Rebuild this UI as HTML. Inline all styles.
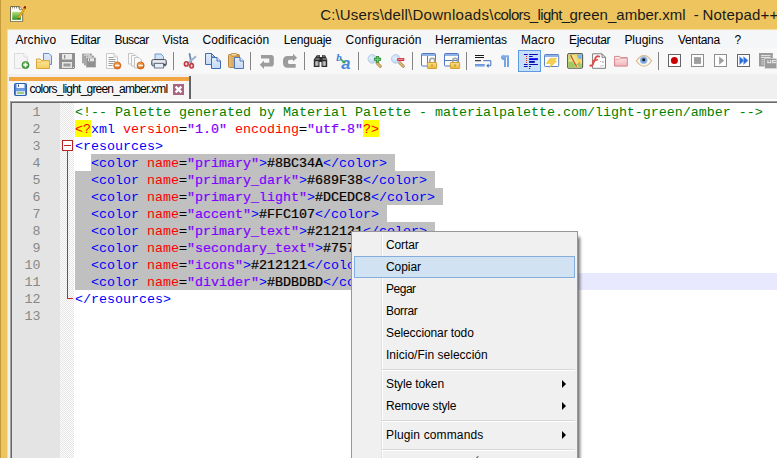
<!DOCTYPE html>
<html lang="es">
<head>
<meta charset="utf-8">
<title>Notepad++</title>
<style>
html,body{margin:0;padding:0;}
body{width:777px;height:458px;overflow:hidden;position:relative;background:#EEC45E;font-family:"Liberation Sans",sans-serif;}
#win{position:absolute;left:0;top:0;width:777px;height:458px;overflow:hidden;}
#lb{position:absolute;left:0;top:0;width:1px;height:458px;background:#C39A3C;}
#title{position:absolute;left:320px;top:3px;height:24px;line-height:24px;font-size:15px;color:#1a1a1a;white-space:pre;}
.ts{position:absolute;top:0;white-space:pre;}
#client{position:absolute;left:8px;top:30px;width:780px;height:440px;background:#F0F0F0;}
#menubar{position:absolute;left:8px;top:30px;width:780px;height:18px;background:#F5F6F7;}
#crl{position:absolute;left:7px;top:29px;width:1px;height:440px;background:#F4DDA2;}
#crt{position:absolute;left:7px;top:29px;width:780px;height:1px;background:#F4DDA2;}
.mi{position:absolute;top:30px;height:20px;line-height:21px;font-size:12px;color:#000;white-space:nowrap;}
#toolbar{position:absolute;left:8px;top:48px;width:780px;height:26px;background:#F8F8F9;}
.tsep{position:absolute;top:52px;width:1px;height:18px;background:#848484;}
#tbhl{position:absolute;left:518px;top:50px;width:21px;height:20px;background:#C7DFFA;border:1px solid #5E9AE0;}
.ic{position:absolute;top:53px;width:16px;height:16px;overflow:visible;}
#tabbar{position:absolute;left:8px;top:74px;width:780px;height:27px;background:#F0F0F0;}
#tab{position:absolute;left:9px;top:77px;width:180px;height:23px;background:#F6F6F6;}
#tabtop{position:absolute;left:9px;top:77px;width:180px;height:4px;background:#F2A541;}
#tabr{position:absolute;left:189px;top:76px;width:2px;height:24px;background:#62666B;}
#tabline{position:absolute;left:9px;top:99px;width:780px;height:2px;background:#FDFDFD;}
#tabico{position:absolute;left:14px;top:83px;width:13px;height:13px;}
#tabx{position:absolute;left:173px;top:84px;width:11px;height:11px;}
#tabtxt{position:absolute;left:29.500px;top:80px;height:18px;line-height:18px;font-size:12px;color:#000;white-space:nowrap;letter-spacing:-0.796px;}
#edwrap{position:absolute;left:10px;top:101px;width:780px;height:400px;background:#fff;border-left:1px solid #A0A0A0;border-top:1px solid #A0A0A0;}
#edwrap2{position:absolute;left:11px;top:102px;width:780px;height:400px;background:#fff;border-left:1px solid #696969;border-top:1px solid #696969;}
#lnm{position:absolute;left:12px;top:103px;width:48px;height:400px;background:#E4E4E4;}
#fold{position:absolute;left:60px;top:103px;width:14px;height:400px;background-color:#fff;
 background-image:linear-gradient(45deg,#E4E4E4 25%,transparent 25%,transparent 75%,#E4E4E4 75%),linear-gradient(45deg,#E4E4E4 25%,transparent 25%,transparent 75%,#E4E4E4 75%);
 background-size:2px 2px;background-position:0 0,1px 1px;}
.ln{position:absolute;left:12px;width:28.500px;margin-top:1px;height:17px;line-height:17px;text-align:right;font-family:"Liberation Mono",monospace;font-size:13.333px;color:#888888;}
.cl{position:absolute;left:75px;margin-top:1px;height:17px;line-height:17px;font-family:"Liberation Mono",monospace;font-size:13.333px;white-space:pre;color:#000;}
.b{font-weight:normal;-webkit-text-stroke:0.22px currentColor;}
.cm{color:#008000;}
.tg{color:#0000FF;}
.at{color:#FF0000;}
.st{color:#8000FF;}
.df{color:#000;}
.pi{color:#FF0000;}
.yl{position:absolute;top:120px;width:16px;height:17px;background:#FFFF00;}
.sel{position:absolute;height:17px;background:#C0C0C0;}
.curline{position:absolute;left:75px;width:720px;height:17px;background:#E8E8FF;}
#foldbox{position:absolute;left:62px;top:140px;width:9px;height:9px;border:1px solid #B82424;background:#fff;}
#foldbox i{position:absolute;left:1px;top:4px;width:7px;height:1px;background:#B82424;}
#foldv{position:absolute;left:67px;top:151px;width:1px;height:148px;background:#C82828;}
#foldh{position:absolute;left:67px;top:298px;width:6px;height:1px;background:#C82828;}
#caret{position:absolute;left:387px;top:273px;width:1px;height:17px;background:#000;}
/* context menu */
#ctx{position:absolute;left:351px;top:231px;width:225px;height:260px;background:#F0F0F0;border:1px solid #979797;box-shadow:3px 5px 3px -1px rgba(0,0,0,0.55);}
#ctxg{position:absolute;left:29px;top:2px;width:1px;height:260px;background:#E0E0E0;border-right:1px solid #fff;}
.ci{position:absolute;left:34px;height:22px;line-height:22px;font-size:12px;color:#000;white-space:nowrap;}
.csep{position:absolute;left:29px;width:194px;height:1px;background:#D7D7D7;border-bottom:1px solid #fff;}
#hl{position:absolute;left:2px;top:24px;width:219px;height:20px;background:#D1E2F2;border:1px solid #84ACDD;}
.arr{position:absolute;left:210px;width:0;height:0;border-top:4px solid transparent;border-bottom:4px solid transparent;border-left:4px solid #000;}
</style>
</head>
<body>
<div id="win">
<div id="lb"></div><div id="crl"></div><div id="crt"></div>
<svg id="appico" viewBox="0 0 16 16" style="position:absolute;left:10px;top:6px;width:16px;height:16px">
<defs><linearGradient id="gApp" x1="0" y1="0" x2="0" y2="1"><stop offset="0" stop-color="#B7E07A"/><stop offset="1" stop-color="#2F9426"/></linearGradient></defs>
<path d="M.5 .5h9l3.200 3.200v12h-12.200z" fill="#FBFBF6" stroke="#6B6347" stroke-width=".9"/><path d="M9.500 .5v3.200h3.200" fill="#E9E7DA" stroke="#6B6347" stroke-width=".7"/>
<path d="M2 1.800h1M4 1.800h1M6 1.800h1M8 1.800h.8" stroke="#555" stroke-width="1"/>
<rect x="2.200" y="5.800" width="8.700" height="8" fill="url(#gApp)"/>
<path d="M15 1.500l-6.300 10.500" stroke="#B8860B" stroke-width="2.300"/><path d="M15 1.500l-6.300 10.500" stroke="#F2B21D" stroke-width="1.300"/>
<path d="M15.600 .4l-1.200 2" stroke="#A30F0F" stroke-width="2.300"/><path d="M8.900 11.600l-.9 2 1.800-1.300z" fill="#3A2A10"/>
</svg>
<div id="title"><span class="ts" id="t0" style="left:0.2px;letter-spacing:0.155px">C:\Users\dell\</span><span class="ts" id="t1" style="left:92.4px;letter-spacing:0.291px">Downloads\</span><span class="ts" id="t2" style="left:173.7px;letter-spacing:-0.648px">colors_light_</span><span class="ts" id="t3" style="left:249.5px;letter-spacing:0.014px">green_amber.xml</span><span class="ts" id="t4" style="left:369.5px;letter-spacing:0.000px"> - </span><span class="ts" id="t5" style="left:382.6px;letter-spacing:0.171px">Notepad++</span></div>
<div id="client"></div>
<div id="menubar"></div>
<span class="mi fit" id="m0" style="left:15.4px;letter-spacing:0.114px">Archivo</span>
<span class="mi fit" id="m1" style="left:70.6px;letter-spacing:-0.272px">Editar</span>
<span class="mi fit" id="m2" style="left:114.4px;letter-spacing:-0.512px">Buscar</span>
<span class="mi fit" id="m3" style="left:162.6px;letter-spacing:-0.117px">Vista</span>
<span class="mi fit" id="m4" style="left:202.4px;letter-spacing:0.130px">Codificación</span>
<span class="mi fit" id="m5" style="left:283.7px;letter-spacing:-0.184px">Lenguaje</span>
<span class="mi fit" id="m6" style="left:345.6px;letter-spacing:0.154px">Configuración</span>
<span class="mi fit" id="m7" style="left:435.0px;letter-spacing:0.006px">Herramientas</span>
<span class="mi fit" id="m8" style="left:521.0px;letter-spacing:0.064px">Macro</span>
<span class="mi fit" id="m9" style="left:569.0px;letter-spacing:-0.347px">Ejecutar</span>
<span class="mi fit" id="m10" style="left:624.4px;letter-spacing:-0.027px">Plugins</span>
<span class="mi fit" id="m11" style="left:678.0px;letter-spacing:-0.324px">Ventana</span>
<span class="mi fit" id="m12" style="left:734.5px;letter-spacing:0.000px">?</span>
<div id="toolbar"></div>

<svg width="0" height="0" style="position:absolute">
<defs>
<linearGradient id="gFold" x1="0" y1="0" x2="0" y2="1"><stop offset="0" stop-color="#FCE9A6"/><stop offset="1" stop-color="#F5CF5E"/></linearGradient>
<linearGradient id="gPage" x1="0" y1="0" x2="0" y2="1"><stop offset="0" stop-color="#E3ECFA"/><stop offset="1" stop-color="#C5D8F5"/></linearGradient>
<linearGradient id="gClip" x1="0" y1="0" x2="1" y2="0"><stop offset="0" stop-color="#E9BE7C"/><stop offset="1" stop-color="#C98F3E"/></linearGradient>
<radialGradient id="gGreen" cx="0.4" cy="0.35" r="0.7"><stop offset="0" stop-color="#7CC56A"/><stop offset="1" stop-color="#2E8A2A"/></radialGradient>
<radialGradient id="gOrange" cx="0.4" cy="0.35" r="0.7"><stop offset="0" stop-color="#F9A64A"/><stop offset="1" stop-color="#D9600F"/></radialGradient>
<linearGradient id="gPink" x1="0" y1="0" x2="0" y2="1"><stop offset="0" stop-color="#FBECEC"/><stop offset="1" stop-color="#F1B4B8"/></linearGradient>
<linearGradient id="gLock" x1="0" y1="0" x2="0" y2="1"><stop offset="0" stop-color="#FBE08A"/><stop offset="1" stop-color="#E8B63C"/></linearGradient>
<linearGradient id="gPrn" x1="0" y1="0" x2="0" y2="1"><stop offset="0" stop-color="#E8EAEE"/><stop offset="1" stop-color="#9AA0AC"/></linearGradient>
<radialGradient id="gLens" cx="0.4" cy="0.4" r="0.7"><stop offset="0" stop-color="#E6F0FB"/><stop offset="1" stop-color="#B5CFEE"/></radialGradient>
</defs></svg>

<div id="tbhl"></div>
<svg class="ic" style="left:13px" viewBox="0 0 16 16"><path d="M1.500 .5h9.500l3.500 3.500v11.500h-13z" fill="#F5F5F5" stroke="#DCDCDC"/><path d="M11 .5v3.500h3.500" fill="#FCFCFC" stroke="#DCDCDC"/><circle cx="12.500" cy="12" r="3.600" fill="url(#gGreen)" stroke="#2D7A2A" stroke-width=".6"/><path d="M12.500 9.800v4.400M10.300 12h4.400" stroke="#fff" stroke-width="1.500"/></svg>
<svg class="ic" style="left:36px" viewBox="0 0 16 16"><path d="M7.500 .5h5.500l2.500 2.500v8.500h-8z" fill="url(#gPage)" stroke="#5F8FD0"/><path d="M.5 15.500v-9.500h3.500l1.500 1.500h8v8z" fill="url(#gFold)" stroke="#D9A53C"/><path d="M1 9.500h4l1.500-1.500h7" fill="none" stroke="#E8BC55" stroke-width=".8"/></svg>
<svg class="ic" style="left:59px" viewBox="0 0 16 16"><path d="M0 0h16v15l-1 1h-15z" fill="#8F8F8F"/><rect x="3" y="1" width="10" height="5.500" fill="#E9E9E9"/><rect x="5" y="2" width="1.300" height="3.500" fill="#8F8F8F"/><rect x="3" y="9" width="10" height="6" fill="#E4E4E4"/><rect x="4.500" y="10.500" width="7" height="3" fill="#9A9A9A"/><rect x="14" y="14" width="1" height="1" fill="#E4E4E4"/></svg>
<svg class="ic" style="left:82px" viewBox="0 0 16 16"><rect x="0" y="0.5" width="10" height="10" fill="#909090" stroke="#E9E9E9" stroke-width=".5"/><rect x="2" y="1.3" width="6" height="1.3" fill="#E6E6E6"/><rect x="3" y="1.5" width="1" height="0.8" fill="#909090"/><rect x="2" y="2.5" width="10" height="10" fill="#909090" stroke="#E9E9E9" stroke-width=".5"/><rect x="4" y="3.3" width="6" height="1.3" fill="#E6E6E6"/><rect x="5" y="3.5" width="1" height="0.8" fill="#909090"/><rect x="4" y="4.5" width="10" height="10" fill="#909090" stroke="#E9E9E9" stroke-width=".5"/><rect x="6" y="5.3" width="6" height="3" fill="#E6E6E6"/><rect x="7" y="5.5" width="1" height="2.5" fill="#909090"/></svg>
<svg class="ic" style="left:105px" viewBox="0 0 16 16"><path d="M1.500 .5h7.500l3.500 3.500v11.500h-11z" fill="#FCFCFC" stroke="#C9C9C9"/><path d="M9 .5v3.500h3.500" fill="#F2F2F2" stroke="#C9C9C9"/><path d="M3.500 4.500h5M3.500 6.500h7M3.500 8.500h7M3.500 10.500h5M3.500 12.500h4" stroke="#9C9C9C" stroke-width="1"/><circle cx="12.300" cy="12.500" r="3.600" fill="url(#gOrange)" stroke="#C2540C" stroke-width=".6"/><rect x="10.100" y="11.700" width="4.400" height="1.600" fill="#fff"/></svg>
<svg class="ic" style="left:128px" viewBox="0 0 16 16"><path d="M0.5 0.5h4.500l2.500 2.500v8h-7z" fill="#FAFAFA" stroke="#C4C4C4"/><path d="M3.5 2.5h4.500l2.500 2.500v8h-7z" fill="#FAFAFA" stroke="#C4C4C4"/><path d="M6.5 4.5h4.500l2.500 2.500v8h-7z" fill="#FAFAFA" stroke="#C4C4C4"/><circle cx="12.600" cy="12.500" r="3.600" fill="url(#gOrange)" stroke="#C2540C" stroke-width=".6"/><rect x="10.400" y="11.700" width="4.400" height="1.600" fill="#fff"/></svg>
<svg class="ic" style="left:151px" viewBox="0 0 16 16"><path d="M4 6.500v-5.500h6l2.500 2.500v3z" fill="#CFE2F8" stroke="#6E9AD6"/><rect x=".7" y="6.500" width="14.600" height="6.500" rx="1.800" fill="url(#gPrn)" stroke="#4A5260"/><rect x="3.500" y="10.500" width="9" height="4.500" fill="#E6EEF9" stroke="#6F7A8C"/><rect x="2" y="8.300" width="12" height="1" fill="#F5F6F8"/><rect x="12.500" y="11" width="2" height="1.200" fill="#3A3F48"/></svg>
<svg class="ic" style="left:182px" viewBox="0 0 16 16"><path d="M7.400 .2l2 9.800" stroke="#7088AA" stroke-width="1.800" fill="none"/><path d="M14 3.200l-8 7" stroke="#9CB2D0" stroke-width="2" fill="none"/><ellipse cx="4.300" cy="10.900" rx="1.900" ry="2.100" fill="#F3D9DB" stroke="#C23A44" stroke-width="1.600"/><ellipse cx="9.600" cy="12.800" rx="1.800" ry="2.200" fill="#F3D9DB" stroke="#C23A44" stroke-width="1.600"/></svg>
<svg class="ic" style="left:205px" viewBox="0 0 16 16"><path d="M.5 .5h6l3.500 3.500v7.500h-9.500z" fill="url(#gPage)" stroke="#3F6DB3"/><path d="M6.500 .5v3.500h3.500" fill="none" stroke="#3F6DB3"/><path d="M6.500 4.500h5.500l3.500 3.500v7.500h-9z" fill="url(#gPage)" stroke="#3F6DB3"/><path d="M12 4.500v3.500h3.500" fill="#EEF3FC" stroke="#3F6DB3"/></svg>
<svg class="ic" style="left:228px" viewBox="0 0 16 16"><rect x=".5" y="1.500" width="11" height="13" rx="1" fill="url(#gClip)" stroke="#B98436"/><rect x="3" y=".5" width="6" height="2.500" rx=".8" fill="#F1D9A8" stroke="#B98436" stroke-width=".8"/><path d="M6.500 4.500h5.500l3.500 3.500v7.500h-9z" fill="url(#gPage)" stroke="#4C77B9"/><path d="M12 4.500v3.500h3.500" fill="#EEF3FC" stroke="#4C77B9"/></svg>
<svg class="ic" style="left:259px" viewBox="0 0 16 16"><path d="M2 2h10q2.800 0 2.800 2.800v6q0 2.800-2.800 2.800h-7v2.400l-4.200-4.300 4.200-4.300v2.400h5.300v-4.200h-8.300z" fill="#9C9C9C"/></svg>
<svg class="ic" style="left:282px" viewBox="0 0 16 16"><path d="M11 .8l4.100 3.900-4.100 3.900v-1.800h-3.500q-1.500 0-1.500 1.500v1.100q0 1.500 1.500 1.500h6.200v3.900h-8q-4.700 0-4.700-4.700v-2.500q0-4.700 4.700-4.700h5.300z" fill="#9C9C9C"/></svg>
<svg class="ic" style="left:313px" viewBox="0 0 16 16"><path d="M4 2h3v2h2v-2h3l2.200 4.500v7.400h-5.700v-4.900h-2v4.900h-5.700v-7.400z" fill="#2E2E2E"/><path d="M4.300 2.300h2.200v1.500h-2.600zM9.500 2.300h2.200l.4 1.500h-2.600z" fill="#7A7A7A"/><path d="M3 5l-1 2h4.500v-2zM9.500 5v2h4.500l-1-2z" fill="#6E6E6E"/><rect x="2" y="8.300" width="3.600" height="4.400" fill="#9A9A9A"/><rect x="9.400" y="8.300" width="3.600" height="4.400" fill="#9A9A9A"/><rect x="3.300" y="8.300" width="1" height="4.400" fill="#D5D5D5"/><rect x="10.700" y="8.300" width="1" height="4.400" fill="#D5D5D5"/></svg>
<svg class="ic" style="left:336px" viewBox="0 0 16 16"><text x=".2" y="8" font-family="Liberation Serif, serif" font-style="italic" font-weight="bold" font-size="11" fill="#3F7AD6">b</text><text x="5.300" y="15.800" font-family="Liberation Sans, sans-serif" font-style="italic" font-weight="bold" font-size="16.500" fill="#4A88E0">a</text><path d="M4.500 6l3.500 3.200" stroke="#35A24C" stroke-width="1.600"/><path d="M9.600 10.600l-3.600-.6 2.800-2.600z" fill="#35A24C"/></svg>
<svg class="ic" style="left:367px" viewBox="0 0 16 16"><path d="M10 10l3.300 3.300" stroke="#A9803F" stroke-width="3" stroke-linecap="round"/><path d="M10 10l3.300 3.300" stroke="#E2BF80" stroke-width="1.500" stroke-linecap="round"/><circle cx="5.300" cy="5.900" r="4.300" fill="url(#gLens)" stroke="#B5CCE8" stroke-width=".9"/><path d="M10.600 2.900v6.900M7.100 6.350h7" stroke="#2E8E39" stroke-width="3"/><path d="M10.600 3.700v5.300M7.900 6.350h5.400" stroke="#6FC873" stroke-width="1.300"/></svg>
<svg class="ic" style="left:390px" viewBox="0 0 16 16"><path d="M9.700 9.700l3.600 3.600" stroke="#A9803F" stroke-width="3" stroke-linecap="round"/><path d="M9.700 9.700l3.600 3.600" stroke="#E2BF80" stroke-width="1.500" stroke-linecap="round"/><circle cx="5.700" cy="5.900" r="4.300" fill="url(#gLens)" stroke="#B5CCE8" stroke-width=".9"/><rect x="7.200" y="5" width="7.100" height="3" rx=".4" fill="#D22F3E"/><rect x="8" y="5.800" width="5.500" height="1" fill="#F59AA0"/></svg>
<svg class="ic" style="left:421px" viewBox="0 0 16 16"><rect x=".5" y=".5" width="14" height="12.500" rx=".8" fill="#FDFDFD" stroke="#4F78C0"/><rect x="1" y="1" width="13" height="2" fill="#8FB2E6"/><path d="M6.500 3v10" stroke="#4F78C0"/><path d="M8.800 9.500v-1.800a2.450 2.450 0 0 1 4.900 0v1.800" fill="none" stroke="#A4A4A4" stroke-width="1.700"/><rect x="6.400" y="9.500" width="9.200" height="6" rx=".6" fill="url(#gLock)" stroke="#D2A030"/><rect x="10.300" y="11.300" width="1.400" height="2.400" fill="#C79A2E"/></svg>
<svg class="ic" style="left:444px" viewBox="0 0 16 16"><rect x=".5" y=".5" width="14" height="12.500" rx=".8" fill="#FDFDFD" stroke="#4F78C0"/><rect x="1" y="1" width="13" height="2" fill="#8FB2E6"/><path d="M1 7.500h13" stroke="#4F78C0"/><path d="M8.800 9.500v-1.800a2.450 2.450 0 0 1 4.900 0v1.800" fill="none" stroke="#A4A4A4" stroke-width="1.700"/><rect x="6.400" y="9.500" width="9.200" height="6" rx=".6" fill="url(#gLock)" stroke="#D2A030"/><rect x="10.300" y="11.300" width="1.400" height="2.400" fill="#C79A2E"/></svg>
<svg class="ic" style="left:475px" viewBox="0 0 16 16"><path d="M0 2.500h9M0 4.500h9M0 7.700h6" stroke="#1A1A1A" stroke-width="1"/><rect x="0" y="11.200" width="9.700" height="2.400" fill="#7FA9E3"/><rect x="0" y="11.200" width="9.700" height=".9" fill="#5E90D6"/><path d="M8.200 7.700h7.600v5h-2.600" fill="none" stroke="#3F6FBF" stroke-width="1"/><path d="M13.600 10.600v4.200l-2.400-2.100z" fill="#3F6FBF"/></svg>
<svg class="ic" style="left:498px" viewBox="0 0 16 16"><path d="M6.500 2h4.500v11.900h-2v-9.900h-1v9.900h-2v-7a2.500 2.500 0 0 1-3-2.450a2.500 2.500 0 0 1 3.500-2.450z" fill="#74A5E4"/><path d="M5.500 2h5.500v1.300h-7.300z" fill="#9CC3F0"/></svg>
<svg class="ic" style="left:521px" viewBox="0 0 16 16"><g fill="#0A0AB4"><rect x="2.900" y="1" width="3.800" height="1"/><rect x="8.100" y="1" width="8.800" height="1"/><rect x="8.100" y="3" width="3.600" height="1"/><rect x="8.100" y="5.200" width="8.800" height="1.900" fill="#0000F0"/><rect x="8.100" y="8" width="5.700" height="1.900"/><rect x="2.900" y="11" width="3.800" height="1"/><rect x="8.100" y="11" width="8.800" height="1"/><rect x="2.900" y="13" width="3.800" height="1"/><rect x="8.100" y="13" width="1.800" height="1"/><rect x="8.100" y="15" width="1" height="1"/></g><g fill="#D83030"><rect x="5" y="3" width="1" height="1"/><rect x="5" y="5" width="1" height="1"/><rect x="5" y="7" width="1" height="1"/><rect x="5" y="9" width="1" height="1"/></g></svg>
<svg class="ic" style="left:544px" viewBox="0 0 16 16"><rect x=".5" y="1.500" width="14.200" height="12" rx=".8" fill="#FDFDFD" stroke="#5C82C0"/><rect x="1" y="2" width="13.200" height="2" fill="#8FB2E6"/><path d="M6 5.300h6.800l-2.600 2.900h2.600l-7.600 6.600l1.900-4.300h-4.900z" fill="#F5CF4E" stroke="#E8BC3C" stroke-width=".5"/></svg>
<svg class="ic" style="left:567px" viewBox="0 0 16 16"><rect x=".6" y=".6" width="15" height="14.600" rx="1.500" fill="#EDE58A" stroke="#5A5A5A" stroke-width="1.100"/><path d="M1.300 9l3.500-.8 2.500 3 1.700 3.400h-7.700z" fill="#9CCB62"/><path d="M10 1.800h4.600v4.400l-3.600-.4z" fill="#79B4E6"/><path d="M1.300 1.500h3l1 3.500-4 3z" fill="#C9DE7A"/><path d="M10.500 10l4.200 .5v4h-3z" fill="#96CC60"/><path d="M7 1.500h2.500l1 4 4 .8v3.500l-4-.3z" fill="#F3D766"/><path d="M3.600 2l3.400 7 2.800 4.600" stroke="#DA452C" stroke-width="1.200" fill="none"/><path d="M9.600 12.400l3.500-3.600" stroke="#EE8E30" stroke-width="1" fill="none"/></svg>
<svg class="ic" style="left:590px" viewBox="0 0 16 16"><path d="M2.600 .8h9.400l3.500 3.500v11h-12.900z" fill="#FEFEFE" stroke="#7C7C7C"/><path d="M12 .8v3.500h3.500" fill="none" stroke="#7C7C7C"/><path d="M13 8v2M13 12v1.200M10 8.500h.8M10.500 13h1" stroke="#999" stroke-width="1"/><path d="M9.200 3.600c-1.600-1-3-.3-3.700 1.400l-2.700 6.400c-.5 1.200-1.300 1.600-2.500 1.200" fill="none" stroke="#E04C4C" stroke-width="1.900" stroke-linecap="round"/><path d="M2.600 8.300l4.800-1.500" stroke="#E04C4C" stroke-width="1.500" stroke-linecap="round"/></svg>
<svg class="ic" style="left:613px" viewBox="0 0 16 16"><path d="M1.600 13.100v-9.700h4.900l1 1.200h6.800v8.500z" fill="url(#gPink)" stroke="#D3848B"/><path d="M2.500 6.500h3.500l1-1h6.800" fill="none" stroke="#E6A6AA" stroke-width=".9"/></svg>
<svg class="ic" style="left:636px" viewBox="0 0 16 16"><path d="M.4 8c2.500-3.900 5-5.400 7.600-5.400s5.100 1.500 7.600 5.400c-2.500 3.500-5 5.200-7.600 5.200s-5.100-1.700-7.600-5.200z" fill="#FAF7F1" stroke="#D9BB8C" stroke-width="1.200"/><circle cx="7.700" cy="7.200" r="3.600" fill="#76A3DB"/><circle cx="7.700" cy="7.200" r="3.300" fill="none" stroke="#A3C2EA" stroke-width=".7"/><circle cx="7.700" cy="6.800" r="1.500" fill="#141C30"/></svg>
<svg class="ic" style="left:667px" viewBox="0 0 16 16"><rect x="1.500" y="1.500" width="12" height="12" fill="#FDFDFD" stroke="#666" stroke-width="1"/><circle cx="7.400" cy="7.400" r="3.500" fill="#CB0000"/></svg>
<svg class="ic" style="left:690px" viewBox="0 0 16 16"><rect x="1.500" y="1.500" width="12" height="12" fill="#FDFDFD" stroke="#8E8E8E" stroke-width="1"/><rect x="4" y="4.100" width="7" height="6.800" fill="#9E9E9E"/></svg>
<svg class="ic" style="left:713px" viewBox="0 0 16 16"><rect x="1.500" y="1.500" width="12" height="12" fill="#FDFDFD" stroke="#8E8E8E" stroke-width="1"/><path d="M6.100 3.400v8.300l5.100-4.150z" fill="#9E9E9E"/></svg>
<svg class="ic" style="left:736px" viewBox="0 0 16 16"><rect x="1.500" y="1.500" width="12" height="12" fill="#FDFDFD" stroke="#666" stroke-width="1"/><path d="M3.500 3.400v8.300l4.700-4.150zM7.500 3.400v8.300l4.700-4.150z" fill="#2B6BD8" stroke="#8DB8F2" stroke-width=".5"/></svg>
<svg class="ic" style="left:759px" viewBox="0 0 16 16"><rect x="0" y="0" width="13.800" height="13.400" fill="#9A9A9A"/><rect x="2" y="2" width="9.500" height="1.200" fill="#E2E2E2"/><rect x="2" y="4" width="9.500" height="1" fill="#E2E2E2"/><g fill="#E2E2E2"><rect x="2.500" y="6" width="1.200" height="1.200"/><rect x="4.500" y="6" width="1.200" height="1.200"/><rect x="2.500" y="8.200" width="1.200" height="1.200"/><rect x="4.500" y="8.200" width="1.200" height="1.200"/><rect x="2.500" y="10.400" width="1.200" height="1.200"/><rect x="4.500" y="10.400" width="1.200" height="1.200"/></g><rect x="5.800" y="5.400" width="12" height="10.200" fill="#9A9A9A" stroke="#ECECEC" stroke-width=".5"/><rect x="8.300" y="7" width="1.200" height="3.200" fill="#E2E2E2"/><rect x="8.300" y="9" width="3.800" height="1.200" fill="#E2E2E2"/><rect x="11" y="7" width="1.200" height="3.200" fill="#E2E2E2"/><rect x="13" y="7" width="4" height="1.200" fill="#E2E2E2"/><rect x="13" y="7" width="1.200" height="3.200" fill="#E2E2E2"/><rect x="13" y="9" width="4" height="1.200" fill="#E2E2E2"/></svg>
<div class="tsep" style="left:173px"></div>
<div class="tsep" style="left:250px"></div>
<div class="tsep" style="left:304px"></div>
<div class="tsep" style="left:358px"></div>
<div class="tsep" style="left:412px"></div>
<div class="tsep" style="left:466px"></div>
<div class="tsep" style="left:658px"></div>
<div id="tabbar"></div>
<div id="tab"></div><div id="tabtop"></div><div id="tabr"></div>
<div id="tabline"></div>
<svg id="tabico" viewBox="0 0 13 13"><rect x=".5" y=".5" width="12" height="12" rx="1" fill="#4C7FD0" stroke="#2F5FAE"/><rect x="2.500" y="1" width="8" height="4.200" fill="#F4F8FE"/><rect x="4" y="1.600" width="1" height="2.200" fill="#35506F"/><rect x="2" y="5.600" width="9" height="2.400" fill="#6E9BE0"/><rect x="2" y="8.200" width="9" height="3.800" fill="#E6EEF8"/><rect x="3" y="9.300" width="7" height="1.400" fill="#7CC24C"/></svg>
<svg id="tabx" viewBox="0 0 11 11"><rect width="11" height="11" fill="#AA6480"/><path d="M2.600 2.600l5.800 5.800M8.400 2.600l-5.800 5.800" stroke="#fff" stroke-width="2.200"/></svg>
<div id="tabtxt">colors_light_green_amber.xml</div>
<div id="edwrap"></div><div id="edwrap2"></div>
<div id="lnm"></div><div id="fold"></div>
<div class="yl" style="left:75px"></div><div class="yl" style="left:363px"></div>
<div class="curline" style="top:273px"></div>
<div class="sel" style="left:91px;top:154px;width:304px"></div>
<div class="sel" style="left:75px;top:171px;width:360px"></div>
<div class="sel" style="left:75px;top:188px;width:368px"></div>
<div class="sel" style="left:75px;top:205px;width:312px"></div>
<div class="sel" style="left:75px;top:222px;width:360px"></div>
<div class="sel" style="left:75px;top:239px;width:376px"></div>
<div class="sel" style="left:75px;top:256px;width:304px"></div>
<div class="sel" style="left:75px;top:273px;width:312px"></div>
<div class="ln" style="top:103px">1</div>
<div class="cl" style="top:103px"><span class="cm">&lt;!-- Palette generated by Material Palette - materialpalette.com/light-green/amber --&gt;</span></div>
<div class="ln" style="top:120px">2</div>
<div class="cl" style="top:120px"><span class="pi">&lt;?</span><span class="tg">xml</span><span class="at"> version</span><span class="df b">=</span><span class="st b">"1.0"</span><span class="at"> encoding</span><span class="df b">=</span><span class="st b">"utf-8"</span><span class="pi">?&gt;</span></div>
<div class="ln" style="top:137px">3</div>
<div class="cl" style="top:137px"><span class="tg">&lt;resources&gt;</span></div>
<div class="ln" style="top:154px">4</div>
<div class="cl" style="top:154px">  <span class="tg">&lt;color</span><span class="at"> name</span><span class="df b">=</span><span class="st b">"primary"</span><span class="tg">&gt;</span><span class="df b">#8BC34A</span><span class="tg">&lt;/color&gt;</span></div>
<div class="ln" style="top:171px">5</div>
<div class="cl" style="top:171px">  <span class="tg">&lt;color</span><span class="at"> name</span><span class="df b">=</span><span class="st b">"primary_dark"</span><span class="tg">&gt;</span><span class="df b">#689F38</span><span class="tg">&lt;/color&gt;</span></div>
<div class="ln" style="top:188px">6</div>
<div class="cl" style="top:188px">  <span class="tg">&lt;color</span><span class="at"> name</span><span class="df b">=</span><span class="st b">"primary_light"</span><span class="tg">&gt;</span><span class="df b">#DCEDC8</span><span class="tg">&lt;/color&gt;</span></div>
<div class="ln" style="top:205px">7</div>
<div class="cl" style="top:205px">  <span class="tg">&lt;color</span><span class="at"> name</span><span class="df b">=</span><span class="st b">"accent"</span><span class="tg">&gt;</span><span class="df b">#FFC107</span><span class="tg">&lt;/color&gt;</span></div>
<div class="ln" style="top:222px">8</div>
<div class="cl" style="top:222px">  <span class="tg">&lt;color</span><span class="at"> name</span><span class="df b">=</span><span class="st b">"primary_text"</span><span class="tg">&gt;</span><span class="df b">#212121</span><span class="tg">&lt;/color&gt;</span></div>
<div class="ln" style="top:239px">9</div>
<div class="cl" style="top:239px">  <span class="tg">&lt;color</span><span class="at"> name</span><span class="df b">=</span><span class="st b">"secondary_text"</span><span class="tg">&gt;</span><span class="df b">#757575</span><span class="tg">&lt;/color&gt;</span></div>
<div class="ln" style="top:256px">10</div>
<div class="cl" style="top:256px">  <span class="tg">&lt;color</span><span class="at"> name</span><span class="df b">=</span><span class="st b">"icons"</span><span class="tg">&gt;</span><span class="df b">#212121</span><span class="tg">&lt;/color&gt;</span></div>
<div class="ln" style="top:273px">11</div>
<div class="cl" style="top:273px">  <span class="tg">&lt;color</span><span class="at"> name</span><span class="df b">=</span><span class="st b">"divider"</span><span class="tg">&gt;</span><span class="df b">#BDBDBD</span><span class="tg">&lt;/color&gt;</span></div>
<div class="ln" style="top:290px">12</div>
<div class="cl" style="top:290px"><span class="tg">&lt;/resources&gt;</span></div>
<div class="ln" style="top:307px">13</div>
<div id="foldbox"><i></i></div><div id="foldv"></div><div id="foldh"></div>
<div id="caret"></div>
<div id="ctx">
<div id="ctxg"></div>
<div id="hl"></div>
<div class="csep" style="top:137px"></div>
<div class="csep" style="top:188px"></div>
<div class="csep" style="top:217px"></div>
<div class="ci" id="c0" style="top:2px;letter-spacing:-0.109px">Cortar</div>
<div class="ci" id="c1" style="top:24px;letter-spacing:-0.052px">Copiar</div>
<div class="ci" id="c2" style="top:46px;letter-spacing:-0.483px">Pegar</div>
<div class="ci" id="c3" style="top:68px;letter-spacing:-0.309px">Borrar</div>
<div class="ci" id="c4" style="top:90px;letter-spacing:-0.106px">Seleccionar todo</div>
<div class="ci" id="c5" style="top:112px;letter-spacing:0.016px">Inicio/Fin selección</div>
<div class="ci" id="c6" style="top:141px;letter-spacing:-0.128px">Style token</div>
<div class="arr" style="top:148px"></div>
<div class="ci" id="c7" style="top:163px;letter-spacing:-0.200px">Remove style</div>
<div class="arr" style="top:170px"></div>
<div class="ci" id="c8" style="top:192px;letter-spacing:0.136px">Plugin commands</div>
<div class="arr" style="top:199px"></div>
<div class="ci" id="c9" style="top:221px;letter-spacing:-0.020px">Convertir a MAYÚSCULAS</div>
</div>
</div>
</body>
</html>
